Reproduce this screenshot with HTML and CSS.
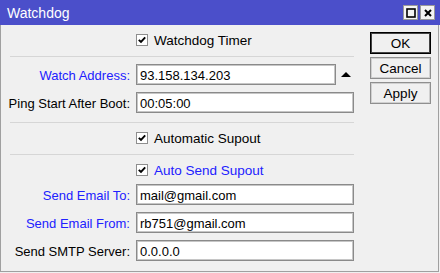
FILE: index.html
```html
<!DOCTYPE html>
<html lang="en">
<head>
  <meta charset="UTF-8" />
  <title>Watchdog</title>
  <link rel="stylesheet" href="styles.css">
</head>
<body>
  <div class="window">
    <div class="title-bar">
      <span class="title">Watchdog</span>
      <div class="title-buttons">
        <span class="tbtn">
          <svg width="12" height="12" viewBox="0 0 12 12"><rect x="2" y="2" width="8" height="8" fill="none" stroke="#000" stroke-width="1.6"/></svg>
        </span>
        <span class="tbtn">
          <svg width="12" height="12" viewBox="0 0 12 12"><path d="M3 3 L9 9 M9 3 L3 9" stroke="#000" stroke-width="2"/></svg>
        </span>
      </div>
    </div>

    <div class="content">
      <div class="form">
        <div class="row check-row row-first">
          <svg class="checkbox" width="12" height="12" viewBox="0 0 12 12"><rect x="0.5" y="0.5" width="11" height="11" fill="#fff" stroke="#8e8e8e"/><path d="M2.8 5.8 L5 8 L9.2 3.4" fill="none" stroke="#000" stroke-width="1.9"/></svg>
          <span>Watchdog Timer</span>
        </div>
        <div class="sep sep-a"></div>

        <div class="row field-row row-b">
          <label class="blue">Watch Address:</label>
          <div class="field short">93.158.134.203</div>
          <span class="arrow-up"></span>
        </div>
        <div class="row field-row">
          <label>Ping Start After Boot:</label>
          <div class="field">00:05:00</div>
        </div>
        <div class="sep sep-b"></div>

        <div class="row check-row row-c">
          <svg class="checkbox" width="12" height="12" viewBox="0 0 12 12"><rect x="0.5" y="0.5" width="11" height="11" fill="#fff" stroke="#8e8e8e"/><path d="M2.8 5.8 L5 8 L9.2 3.4" fill="none" stroke="#000" stroke-width="1.9"/></svg>
          <span>Automatic Supout</span>
        </div>
        <div class="sep sep-a"></div>

        <div class="row check-row row-c">
          <svg class="checkbox" width="12" height="12" viewBox="0 0 12 12"><rect x="0.5" y="0.5" width="11" height="11" fill="#fff" stroke="#8e8e8e"/><path d="M2.8 5.8 L5 8 L9.2 3.4" fill="none" stroke="#000" stroke-width="1.9"/></svg>
          <span class="blue">Auto Send Supout</span>
        </div>
        <div class="row field-row row-c">
          <label class="blue">Send Email To:</label>
          <div class="field">mail@gmail.com</div>
        </div>
        <div class="row field-row">
          <label class="blue">Send Email From:</label>
          <div class="field">rb751@gmail.com</div>
        </div>
        <div class="row field-row">
          <label>Send SMTP Server:</label>
          <div class="field">0.0.0.0</div>
        </div>
      </div>

      <div class="actions">
        <button class="btn default">OK</button>
        <button class="btn">Cancel</button>
        <button class="btn">Apply</button>
      </div>
    </div>
  </div>
</body>
</html>
```

FILE: styles.css
```css
* {
  box-sizing: border-box;
}

body {
  margin: 0;
  background: #f0f0f0;
  font-family: 'Liberation Sans', Arial, sans-serif;
  font-size: 13px;
  color: #000;
}

.window {
  width: 440px;
  height: 273px;
  display: flex;
  flex-direction: column;
}

.title-bar {
  height: 25px;
  background: #4b4fca;
  display: flex;
  align-items: center;
  padding: 0 5px 0 7px;
}

.title {
  color: #fff;
  font-size: 14px;
  flex: 1;
  padding-top: 1px;
}

.title-buttons {
  display: flex;
  gap: 2px;
}

.tbtn {
  width: 15px;
  height: 15px;
  background: #f4f4f4;
  border: 1px solid #9a9a9a;
  display: flex;
  align-items: center;
  justify-content: center;
}

.content {
  width: 439px;
  height: 247px;
  display: flex;
  border: 1px solid #a0a0a0;
  border-top: none;
  background: #f0f0f0;
}

.form {
  width: 360px;
  padding-top: 4px;
}

.row {
  display: flex;
  align-items: center;
  height: 21px;
}

.field-row {
  margin-top: 7px;
}

.row-b {
  margin-top: 7px;
}

.row-c {
  margin-top: 4px;
}

.check-row {
  padding-left: 135px;
  gap: 6px;
  font-size: 13.5px;
}

.check-row .checkbox {
  flex: none;
}

.check-row span {
  padding-top: 1px;
}

label {
  width: 129px;
  margin-right: 6px;
  text-align: right;
  white-space: nowrap;
  padding-top: 1px;
}

.blue {
  color: #2121ff;
}

.field {
  width: 218px;
  height: 21px;
  background: #fff;
  border: 1px solid #8a8a8a;
  box-shadow: inset 0 0 0 1px #c6c6c6;
  padding: 2px 3px 0;
  line-height: 17px;
}

.field.short {
  width: 200px;
}

.arrow-up {
  width: 0;
  height: 0;
  margin-left: 5px;
  margin-bottom: 1px;
  border-left: 5px solid transparent;
  border-right: 5px solid transparent;
  border-bottom: 5px solid #000;
}

.sep {
  height: 1px;
  width: 344px;
  margin-left: 9px;
  background: #d6d6d6;
}

.sep-a {
  margin-top: 6px;
}

.sep-b {
  margin-top: 9px;
}

.actions {
  margin-left: auto;
  margin-right: 7px;
  padding-top: 7px;
  display: flex;
  flex-direction: column;
  gap: 3px;
}

.btn {
  width: 61px;
  height: 22px;
  font-family: 'Liberation Sans', Arial, sans-serif;
  font-size: 13.5px;
  color: #000;
  background: #f0f0f0;
  border: 1px solid #8f8f8f;
  box-shadow: inset 0 0 0 1px #d0d0d0;
  padding: 0;
}

.btn.default {
  border-color: #000;
  box-shadow: inset 0 0 0 1px #444;
}
```
